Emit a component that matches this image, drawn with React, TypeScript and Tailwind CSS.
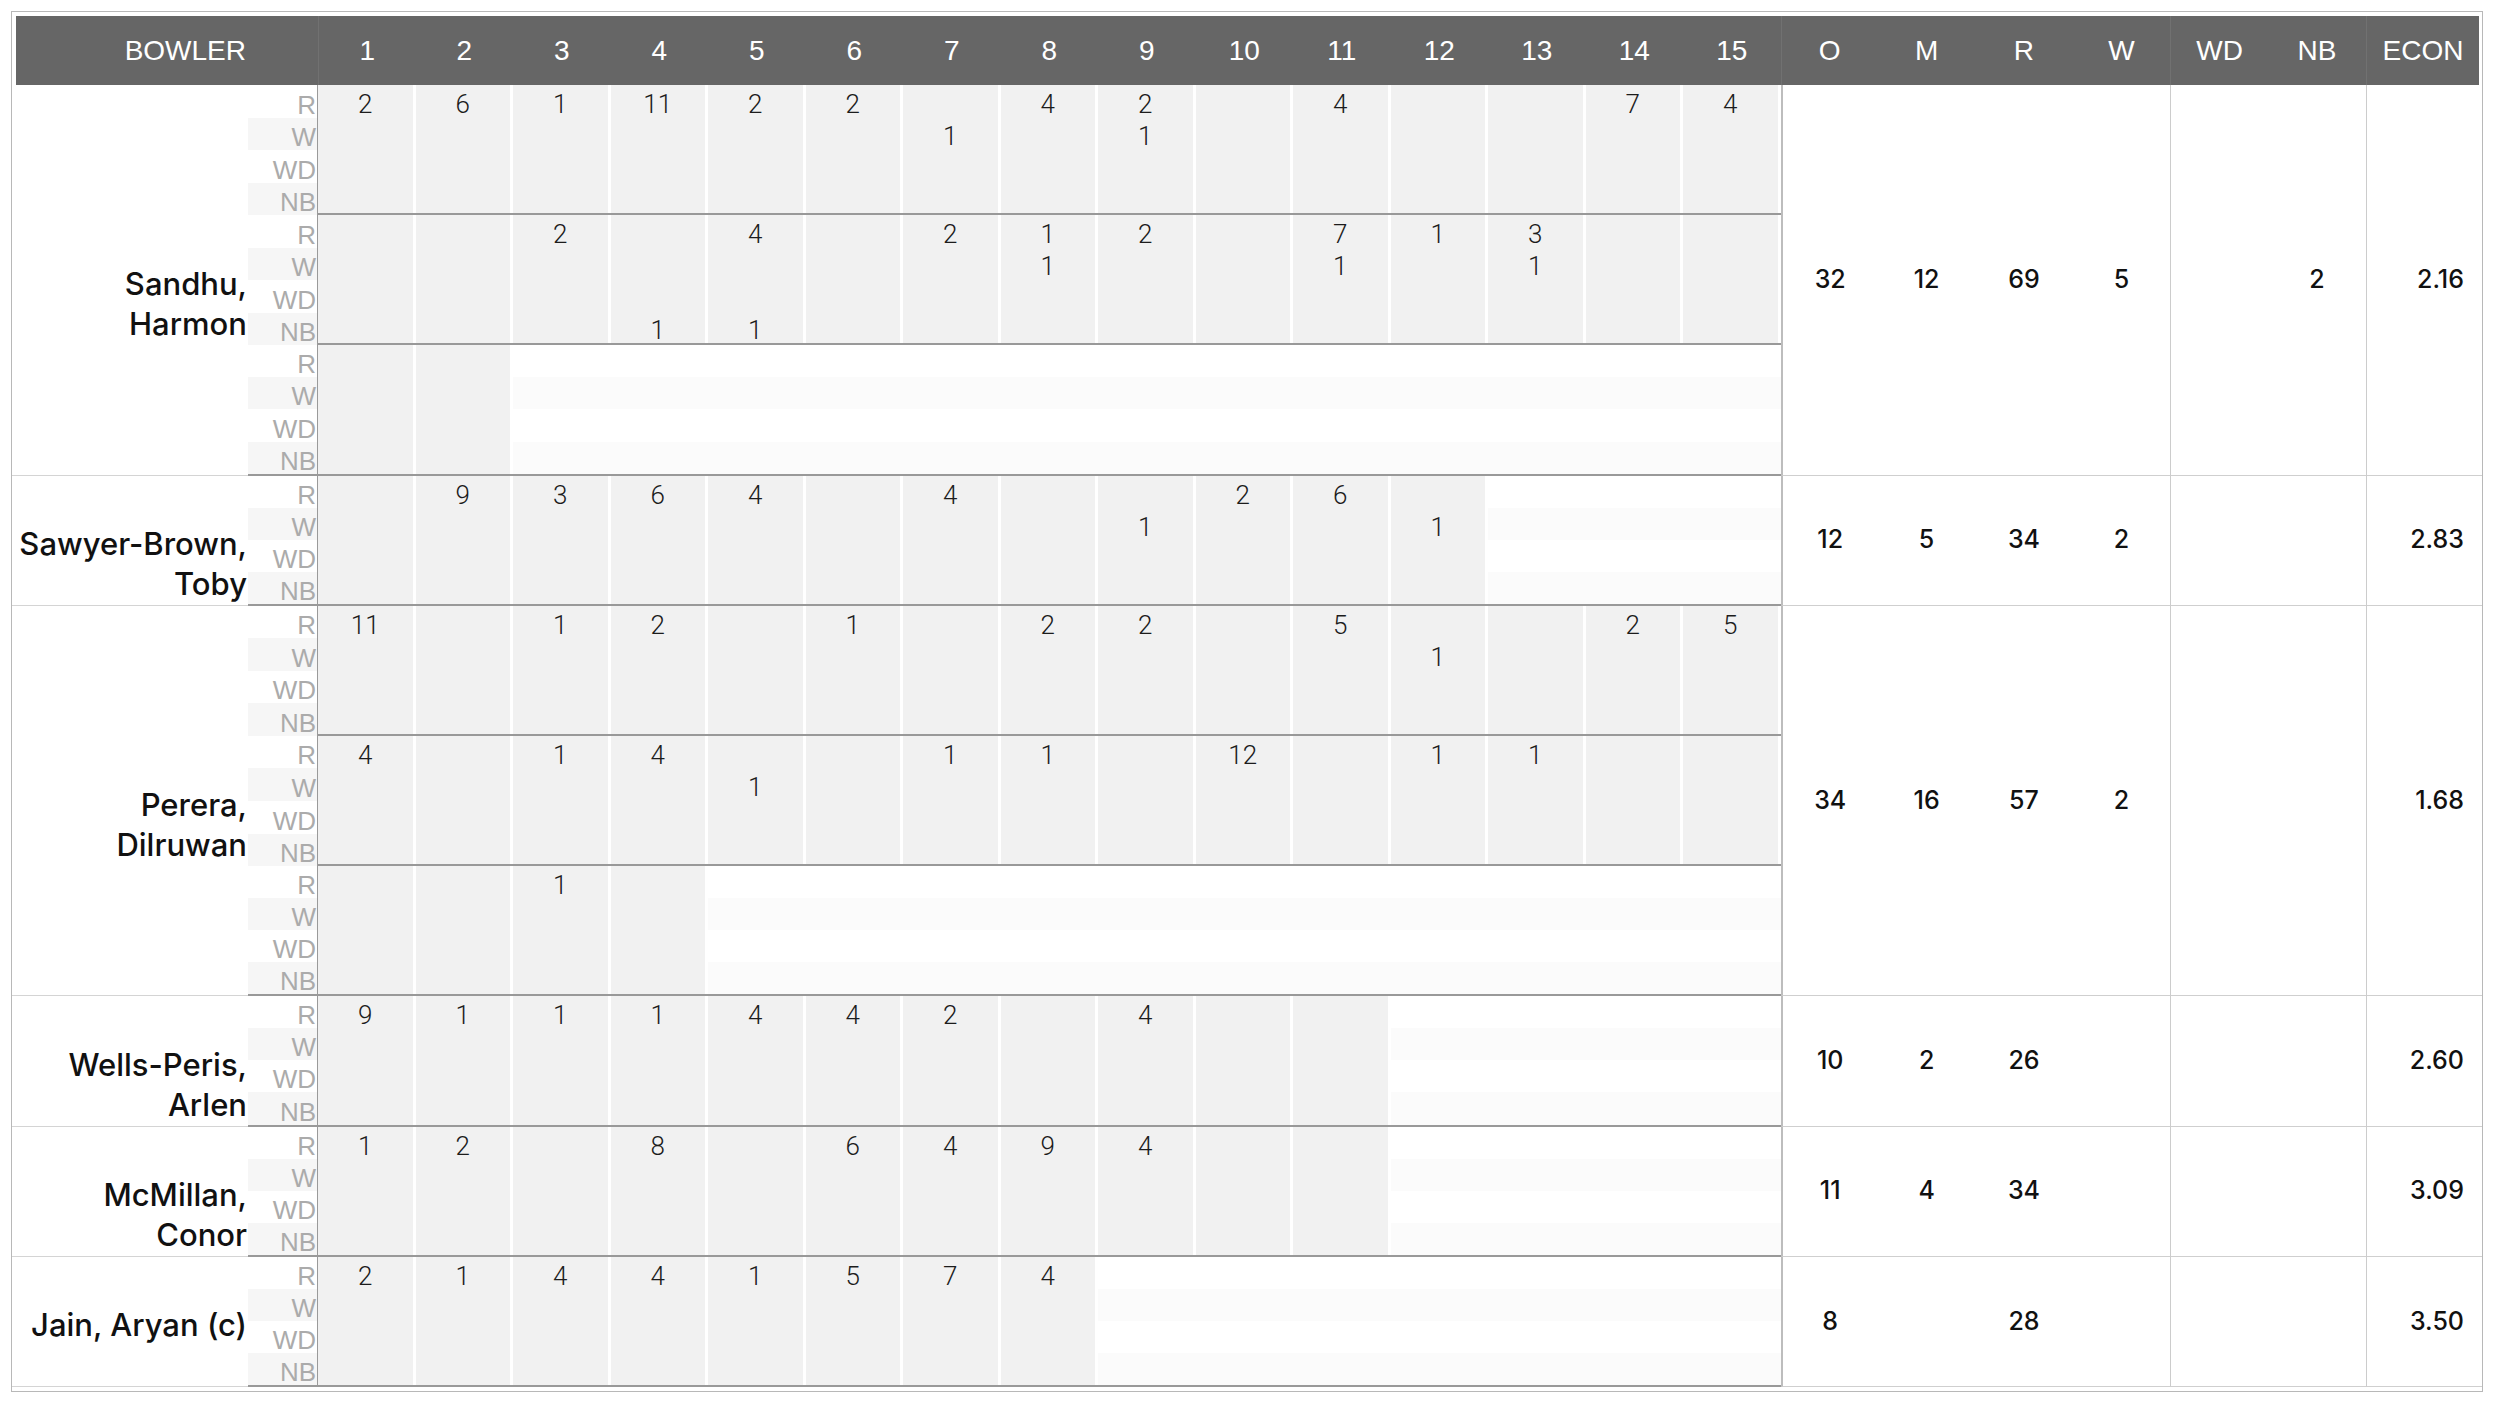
import React from 'react';

const COLS = Array.from({ length: 15 }, (_, i) => i);
const SUBS = ['R', 'W', 'WD', 'NB'] as const;
type Sub = (typeof SUBS)[number];

type Spell = { overs: number } & Partial<Record<Sub, string>>;

type Bowler = {
  name: string[];
  pad: string;
  spells: Spell[];
  o: string;
  m: string;
  r: string;
  w: string;
  wd: string;
  nb: string;
  econ: string;
};

const bowlers: Bowler[] = [
  {
    name: ['Sandhu,', 'Harmon'],
    pad: 'pt-[48px]',
    spells: [
      { overs: 15, R: '2,6,1,11,2,2,,4,2,,4,,,7,4', W: ',,,,,,1,,1,,,,,,' },
      { overs: 15, R: ',,2,,4,,2,1,2,,7,1,3,,', W: ',,,,,,,1,,,1,,1,,', NB: ',,,1,1,,,,,,,,,,' },
      { overs: 2 },
    ],
    o: '32', m: '12', r: '69', w: '5', wd: '', nb: '2', econ: '2.16',
  },
  {
    name: ['Sawyer-Brown,', 'Toby'],
    pad: 'pt-[48px]',
    spells: [{ overs: 12, R: ',9,3,6,4,,4,,,2,6,,,,', W: ',,,,,,,,1,,,1,,,' }],
    o: '12', m: '5', r: '34', w: '2', wd: '', nb: '', econ: '2.83',
  },
  {
    name: ['Perera,', 'Dilruwan'],
    pad: 'pt-[48px]',
    spells: [
      { overs: 15, R: '11,,1,2,,1,,2,2,,5,,,2,5', W: ',,,,,,,,,,,1,,,' },
      { overs: 15, R: '4,,1,4,,,1,1,,12,,1,1,,', W: ',,,,1,,,,,,,,,,' },
      { overs: 4, R: ',,1,,,,,,,,,,,,' },
    ],
    o: '34', m: '16', r: '57', w: '2', wd: '', nb: '', econ: '1.68',
  },
  {
    name: ['Wells-Peris,', 'Arlen'],
    pad: 'pt-[48px]',
    spells: [{ overs: 11, R: '9,1,1,1,4,4,2,,4,,,,,,' }],
    o: '10', m: '2', r: '26', w: '', wd: '', nb: '', econ: '2.60',
  },
  {
    name: ['McMillan,', 'Conor'],
    pad: 'pt-[48px]',
    spells: [{ overs: 11, R: '1,2,,8,,6,4,9,4,,,,,,' }],
    o: '11', m: '4', r: '34', w: '', wd: '', nb: '', econ: '3.09',
  },
  {
    name: ['Jain, Aryan (c)'],
    pad: 'pt-[8px]',
    spells: [{ overs: 8, R: '2,1,4,4,1,5,7,4,,,,,,,' }],
    o: '8', m: '', r: '28', w: '', wd: '', nb: '', econ: '3.50',
  },
];

const cellValue = (spell: Spell, sub: Sub, col: number) => (spell[sub] ?? '').split(',')[col] ?? '';

function SpellRow({ spell, last }: { spell: Spell; last: boolean }) {
  return (
    <div className="flex h-[130.2px]">
      {/* R / W / WD / NB labels */}
      <div className={`w-[70px] shrink-0 flex flex-col border-r border-[#9a9a9a] ${last ? 'border-b-2 border-b-[#999]' : ''}`}>
        {SUBS.map((s, j) => (
          <div
            key={s}
            className={`flex-1 flex items-end justify-end pr-[1px] text-[26px] leading-none text-[#ababab] ${j % 2 ? 'bg-[#f6f6f6]' : ''}`}
          >
            {s}
          </div>
        ))}
      </div>

      {/* overs */}
      <div className="flex border-b-2 border-[#999]">
        {COLS.map((c) => {
          const bowled = c < spell.overs;
          return (
            <div
              key={c}
              className={`w-[97.5px] shrink-0 flex flex-col ${bowled ? 'bg-[#f1f1f1] border-r-[3px] border-white' : 'bg-white'}`}
            >
              {SUBS.map((s, j) => (
                <div
                  key={s}
                  className={`flex-1 flex items-end justify-center font-['Roboto',sans-serif] font-light text-[26px] leading-none text-[#1c1c1c] ${
                    !bowled && j % 2 ? 'bg-[#fbfbfb]' : ''
                  }`}
                >
                  {cellValue(spell, s, c)}
                </div>
              ))}
            </div>
          );
        })}
      </div>
    </div>
  );
}

function BowlerRow({ b }: { b: Bowler }) {
  const stat = "flex items-center justify-center border-b border-[#cfcfcf] font-['Inter',sans-serif] font-medium text-[25px] text-[#111]";
  return (
    <div className="flex">
      <div className={`w-[236px] shrink-0 flex items-center justify-end pr-[1px] border-b border-[#d4d4d4] ${b.pad}`}>
        <div className="text-right font-['Inter',sans-serif] font-medium text-[31px] leading-[40px] text-[#111]">
          {b.name.map((n) => (
            <div key={n}>{n}</div>
          ))}
        </div>
      </div>

      <div className="flex flex-col">
        {b.spells.map((s, i) => (
          <SpellRow key={i} spell={s} last={i === b.spells.length - 1} />
        ))}
      </div>

      <div className={`w-[97.4px] shrink-0 border-l-2 border-l-[#bdbdbd] ${stat}`}>{b.o}</div>
      <div className={`w-[97.4px] shrink-0 ${stat}`}>{b.m}</div>
      <div className={`w-[97.4px] shrink-0 ${stat}`}>{b.r}</div>
      <div className={`w-[97.4px] shrink-0 ${stat}`}>{b.w}</div>
      <div className={`w-[98px] shrink-0 border-l border-l-[#cccccc] ${stat}`}>{b.wd}</div>
      <div className={`w-[98px] shrink-0 ${stat}`}>{b.nb}</div>
      <div className={`flex-1 border-l border-l-[#cccccc] !justify-end pr-[18px] ${stat}`}>{b.econ}</div>
    </div>
  );
}

export default function App() {
  return (
    <div className="min-h-screen bg-white p-[11px] font-['Liberation_Sans',Arial,sans-serif]">
      <div className="w-[2472px] border border-[#b8b8b8] pt-[4px] pb-[4px]">
        {/* Header */}
        <div className="ml-[4px] mr-[3px] h-[69px] flex bg-[#666666] text-white text-[28px]">
          <div className="w-[232px] shrink-0 flex items-center justify-end pr-[2px]">BOWLER</div>
          <div className="w-[70px] shrink-0" />
          {COLS.map((c) => (
            <div
              key={c}
              className={`w-[97.5px] shrink-0 flex items-center justify-center ${c === 0 ? 'border-l border-[#717171]' : ''}`}
            >
              {c + 1}
            </div>
          ))}
          <div className="w-[97.4px] shrink-0 flex items-center justify-center border-l border-[#717171]">O</div>
          <div className="w-[97.4px] shrink-0 flex items-center justify-center">M</div>
          <div className="w-[97.4px] shrink-0 flex items-center justify-center">R</div>
          <div className="w-[97.4px] shrink-0 flex items-center justify-center">W</div>
          <div className="w-[98px] shrink-0 flex items-center justify-center border-l border-[#717171]">WD</div>
          <div className="w-[98px] shrink-0 flex items-center justify-center">NB</div>
          <div className="flex-1 flex items-center justify-center border-l border-[#717171]">ECON</div>
        </div>

        {bowlers.map((b) => (
          <BowlerRow key={b.name.join(' ')} b={b} />
        ))}
      </div>
    </div>
  );
}
